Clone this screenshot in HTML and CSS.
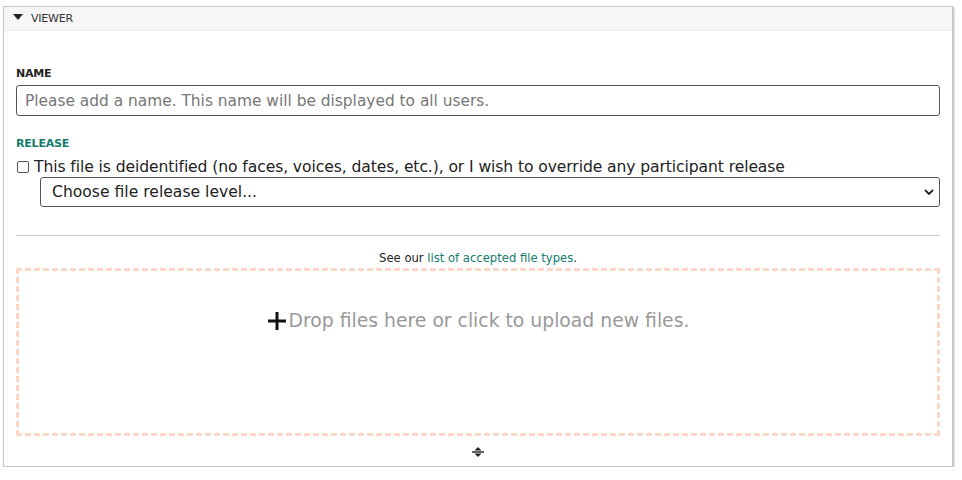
FILE: index.html
```html
<!DOCTYPE html>
<html>
<head>
<meta charset="utf-8">
<link rel="stylesheet" href="styles.css">
</head>
<body>
<div class="panel">
  <div class="panel-head">
    <span class="caret"></span>
    <span class="panel-title">VIEWER</span>
  </div>
  <div class="panel-body">
    <label class="label">NAME</label>
    <input class="text-input" type="text" placeholder="Please add a name. This name will be displayed to all users.">
    <div class="label teal">RELEASE</div>
    <label class="check-row"><input type="checkbox" class="check"> This file is deidentified (no faces, voices, dates, etc.), or I wish to override any participant release</label>
    <div class="select-wrap">
      <select class="select"><option>Choose file release level...</option></select>
    </div>
    <hr class="rule">
    <div class="types">See our <a href="#" class="link">list of accepted file types</a>.</div>
    <div class="drop">
      <svg class="plus" width="20" height="20" viewBox="0 0 20 20"><rect x="1" y="8.5" width="18" height="3" fill="#111"/><rect x="8.5" y="1" width="3" height="18" fill="#111"/></svg><span class="drop-text">Drop files here or click to upload new files.</span>
    </div>
    <div class="resize">
      <svg width="12" height="12" viewBox="0 0 12 12"><path d="M6 1 L9.5 4.5 H2.5 Z" fill="#222"/><rect x="0" y="5.3" width="12" height="1.4" fill="#222"/><path d="M6 11 L9.5 7.5 H2.5 Z" fill="#222"/></svg>
    </div>
  </div>
</div>
</body>
</html>
```
FILE: styles.css
```css
* { box-sizing: border-box; }
html, body { margin: 0; padding: 0; background: #fff; }
body {
  font-family: "DejaVu Sans", "Open Sans", sans-serif;
  color: #222;
  padding: 6px 9px 0 3px;
  width: 962px;
}
.panel {
  width: 950px;
  height: 461px;
  border: 1px solid #c8c8c8;
  box-shadow: 1px 1px 2px rgba(0,0,0,0.3);
  background: #fff;
}
.panel-head {
  height: 24px;
  background: #f6f6f6;
  border-bottom: 1px solid #ececec;
  display: flex;
  align-items: center;
  padding-left: 9px;
}
.caret {
  width: 0; height: 0;
  border-left: 5px solid transparent;
  border-right: 5px solid transparent;
  border-top: 6px solid #222;
  margin-right: 8px;
  margin-top: -4px;
}
.panel-title {
  font-size: 11px;
  color: #333;
  letter-spacing: -0.2px;
}
.panel-body {
  padding: 36px 12px 0 12px;
  display: flex;
  flex-direction: column;
}
.label {
  display: block;
  font-size: 11px;
  font-weight: bold;
  color: #222;
  height: 14px;
  line-height: 14px;
  letter-spacing: -0.2px;
}
.teal { color: #137c6c; margin-top: 21px; }
.text-input {
  margin-top: 4px;
  width: 924px;
  height: 31px;
  border: 1px solid #555;
  border-radius: 3px;
  padding: 0 8px;
  font-family: "DejaVu Sans", sans-serif;
  font-size: 15.4px;
  color: #222;
}
.text-input::placeholder { color: #777; }
.check-row {
  margin-top: 6px;
  font-size: 15.6px;
  height: 20px;
  line-height: 20px;
  display: flex;
  align-items: center;
  color: #222;
  white-space: nowrap;
  letter-spacing: -0.1px;
}
.check {
  width: 12px; height: 12px;
  margin: 0 5px 0 1px;
  appearance: none;
  -webkit-appearance: none;
  border: 1px solid #555;
  border-radius: 2px;
  background: #fff;
}
.select-wrap { padding-left: 24px; margin-top: 0; }
.select {
  width: 900px;
  height: 30px;
  border: 1px solid #555;
  border-radius: 3px;
  background: #fff;
  font-family: "DejaVu Sans", sans-serif;
  font-size: 15.6px;
  color: #222;
  padding: 0 11px;
  appearance: none;
  -webkit-appearance: none;
  background-image: url("data:image/svg+xml;utf8,<svg xmlns='http://www.w3.org/2000/svg' width='10' height='6' viewBox='0 0 10 6'><path d='M1 1 L5 5 L9 1' fill='none' stroke='%23222' stroke-width='1.8'/></svg>");
  background-repeat: no-repeat;
  background-position: right 5px center;
}
.rule {
  margin: 28px 0 0 0;
  border: 0;
  border-top: 1px solid #c8c8c8;
  width: 924px;
}
.types {
  margin-top: 15px;
  text-align: center;
  font-size: 11.6px;
  height: 14px;
  line-height: 14px;
  color: #222;
}
.link { color: #137c6c; text-decoration: none; }
.drop {
  margin-top: 3px;
  width: 924px;
  height: 168px;
  border: 3px dashed #fcd8c4;
  display: flex;
  justify-content: center;
  align-items: center;
  align-self: flex-start;
  padding-bottom: 62px;
}
.plus { margin-right: 2px; }
.drop-text {
  font-size: 18.8px;
  color: #999;
  line-height: 26px;
}
.resize {
  display: flex;
  justify-content: center;
  margin-top: 10px;
}
```
